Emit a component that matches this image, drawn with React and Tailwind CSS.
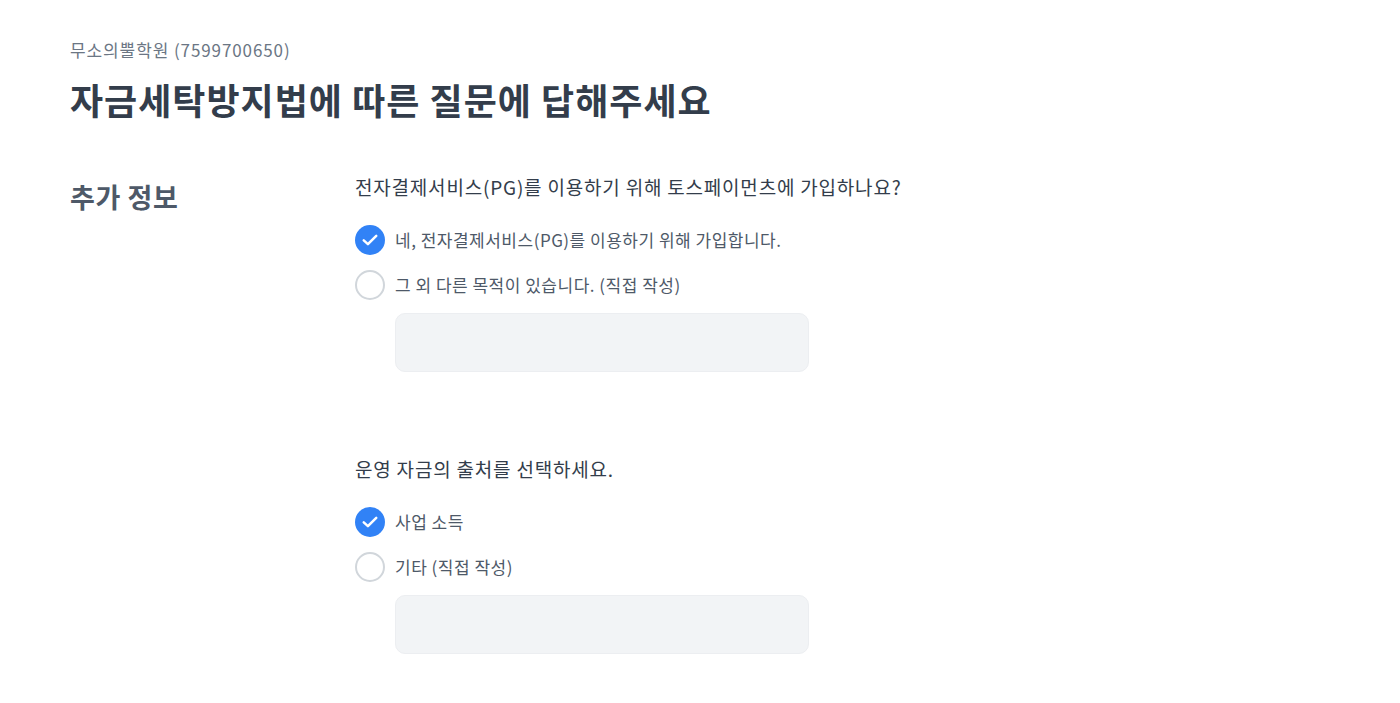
import { useState } from 'react';

const font = { fontFamily: '"Noto Sans CJK KR", "Noto Sans", sans-serif' };

const CheckCircle = ({ checked }) =>
    checked ? (
        <span className="w-[30px] h-[30px] rounded-full bg-[#3182f6] flex items-center justify-center shrink-0">
            <svg className="w-[20px] h-[20px] text-white" fill="none" stroke="currentColor" viewBox="0 0 24 24">
                <path strokeLinecap="round" strokeLinejoin="round" strokeWidth={3} d="M4.5 12.5l5 4.5L19.5 7" />
            </svg>
        </span>
    ) : (
        <span className="w-[30px] h-[30px] rounded-full border-2 border-[#d1d6db] bg-white shrink-0" />
    );

const Question = ({ title, options }) => {
    const [selected, setSelected] = useState(0);

    return (
        <div>
            <p className="text-[19px] leading-[22px] text-[#333d4b] tracking-[0.8px] mt-[3px]">{title}</p>
            <div className="mt-[27px] flex flex-col gap-[15px]">
                {options.map((label, i) => (
                    <button
                        key={label}
                        onClick={() => setSelected(i)}
                        className="flex items-center gap-[10px] text-left"
                    >
                        <CheckCircle checked={selected === i} />
                        <span className="text-[17px] leading-[30px] text-[#4e5968] tracking-[0.5px]">{label}</span>
                    </button>
                ))}
            </div>
            <div className="ml-[40px] mt-[13px] w-[414px] h-[59px] rounded-[10px] bg-[#f2f4f6] border border-[#eceef1]" />
        </div>
    );
};

const App = () => {
    return (
        <div className="min-h-screen bg-white px-[70px] pt-[38px]" style={font}>
            <p className="text-[17px] leading-[24px] text-[#6b7684] tracking-[0.9px]">무소의뿔학원 (7599700650)</p>
            <h1 className="mt-[14px] text-[36px] leading-[46px] font-bold text-[#333d4b] tracking-[1px]">
                자금세탁방지법에 따른 질문에 답해주세요
            </h1>

            <div className="mt-[51px] flex">
                <h2 className="w-[285px] shrink-0 text-[27px] leading-[36px] font-bold text-[#4e5968] tracking-[0.6px] mt-[6px]">추가 정보</h2>
                <div className="flex flex-col gap-[83px]">
                    <Question
                        title="전자결제서비스(PG)를 이용하기 위해 토스페이먼츠에 가입하나요?"
                        options={['네, 전자결제서비스(PG)를 이용하기 위해 가입합니다.', '그 외 다른 목적이 있습니다. (직접 작성)']}
                    />
                    <Question
                        title="운영 자금의 출처를 선택하세요."
                        options={['사업 소득', '기타 (직접 작성)']}
                    />
                </div>
            </div>
        </div>
    );
};

export default App;
